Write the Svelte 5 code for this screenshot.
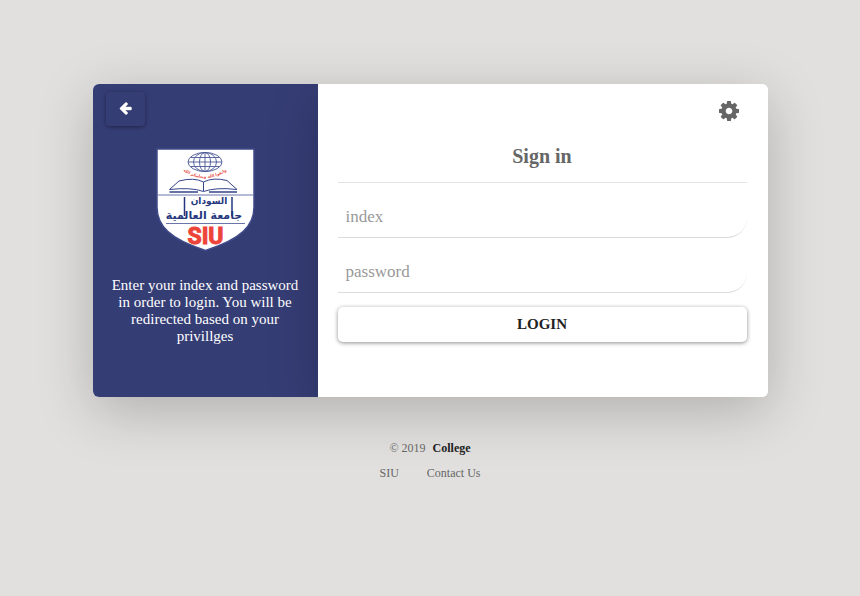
<script>
  let index = $state('');
  let password = $state('');
</script>

<div class="page">
  <main class="card">
    <section class="intro">
      <button class="back" type="button" aria-label="Back">
        <svg width="13" height="13" viewBox="64 128 1664 1664" aria-hidden="true">
          <path fill="currentColor" stroke="currentColor" stroke-width="60" d="M1664 896v128q0 53-32.500 90.500t-84.500 37.500h-704l293 294q38 36 38 90t-38 90l-75 76q-37 37-90 37-52 0-91-37l-651-652q-37-37-37-90 0-52 37-91l651-650q38-38 91-38 52 0 90 38l75 74q38 38 38 91t-38 91l-293 293h704q52 0 84.500 37.500t32.500 90.500z" />
        </svg>
      </button>

      <svg class="logo" width="104" height="108" viewBox="153 145 104 108" role="img" aria-label="SIU">
        <path d="M157 149H254V207C254 226 241 239 205.500 250.500C170 239 157 226 157 207Z" fill="#fff" stroke="#404b8a" stroke-width="1.500" />
        <g fill="none" stroke="#4a5896" stroke-width="0.900">
          <ellipse cx="205" cy="162" rx="17" ry="9.500" />
          <ellipse cx="205" cy="162" rx="11.500" ry="9.500" />
          <ellipse cx="205" cy="162" rx="5.500" ry="9.500" />
          <path d="M205 152.500v19M188 162h34M190.500 157.500h29M190.500 166.500h29" />
        </g>
        <path id="motto" d="M178 167Q205 189 232 167" fill="none" />
        <text class="motto" text-anchor="middle"><textPath href="#motto" startOffset="50%">واتقوا الله ويعلمكم الله</textPath></text>
        <g fill="none" stroke="#36458a" stroke-linejoin="round">
          <path d="M169.500 189.500L179 181Q194 177 203.500 182Q213 177 227 180.500L237 189.500Q216 187 203.500 191.500Q191 187 169.500 189.500ZM203.500 182V191" fill="#fff" stroke-width="1" />
          <path d="M169.500 192H198M209 192H237" stroke-width="1.500" />
        </g>
        <path d="M158 195H253M166 223.500H245" stroke="#6a76a8" stroke-width="1" />
        <g class="arabic" text-anchor="middle">
          <text x="209" y="204" font-size="9">السودان</text>
          <text x="204" y="219" font-size="11">جامعة العالمية</text>
        </g>
        <path d="M184.500 197v19M232 197v19" stroke="#26377e" stroke-width="1.500" />
        <text class="siu" x="205.500" y="244" text-anchor="middle">SIU</text>
      </svg>

      <p>Enter your index and password in order to login. You will be redirected based on your privillges</p>
    </section>

    <section class="signin">
      <button class="settings" type="button" aria-label="Settings">
        <svg width="20" height="20" viewBox="0 -128 1536 1536" aria-hidden="true">
          <path fill="currentColor" fill-rule="evenodd" d="M1024 640q0-106-75-181t-181-75-181 75-75 181 75 181 181 75 181-75 75-181zm512-109v222q0 12-8 23t-20 13l-185 28q-19 54-39 91 35 50 107 138 10 12 10 25t-9 23q-27 37-99 108t-94 71q-12 0-26-9l-138-108q-44 23-91 38-16 136-29 186-7 28-36 28h-222q-14 0-24.500-8.500t-11.500-21.500l-28-184q-49-16-90-37l-141 107q-10 9-25 9-14 0-25-11-126-114-165-168-7-10-7-23 0-12 8-23 15-21 51-66.500t54-70.500q-27-50-41-99l-183-27q-13-2-21-12.500t-8-23.500v-222q0-12 8-23t19-13l186-28q14-46 39-92-40-57-107-138-10-12-10-24 0-10 9-23 26-36 98.500-107.500t94.500-71.500q13 0 26 10l138 107q44-23 91-38 16-136 29-186 7-28 36-28h222q14 0 24.500 8.500t11.500 21.500l28 184q49 16 90 37l142-107q9-9 24-9 13 0 25 10 129 119 165 170 7 8 7 22 0 12-8 23-15 21-51 66.500t-54 70.500q26 50 41 98l183 28q13 2 21 12.500t8 23.500z" />
        </svg>
      </button>

      <h1>Sign in</h1>
      <form onsubmit={(e) => e.preventDefault()}>
        <input type="text" placeholder="index" aria-label="index" bind:value={index} />
        <input type="password" placeholder="password" aria-label="password" bind:value={password} />
        <button class="login" type="submit">LOGIN</button>
      </form>
    </section>
  </main>

  <footer>
    <div>© 2019 <a class="brand" href="#college">College</a></div>
    <nav>
      <a href="#siu">SIU</a>
      <a href="#contact">Contact Us</a>
    </nav>
  </footer>
</div>

<style>
  :global(body) {
    margin: 0;
    background: #e1e0de;
  }
  .page {
    box-sizing: border-box;
    min-height: 100vh;
    padding: 84px 20px 20px;
    font-family: "Liberation Serif", "Times New Roman", serif;
    color: #666;
  }
  .card {
    display: grid;
    grid-template-columns: 1fr 2fr;
    max-width: 675px;
    margin: 0 auto;
    border-radius: 6px;
    overflow: hidden;
    background: #fff;
    box-shadow: 0 14px 56px rgba(0, 0, 0, 0.22);
  }
  .intro {
    display: flex;
    flex-direction: column;
    align-items: center;
    padding: 8px 13px 52px;
    color: #fff;
    background: #353d75;
  }
  button {
    padding: 0;
    border: 0;
    background: none;
    font-family: inherit;
    cursor: pointer;
  }
  .back {
    box-sizing: border-box;
    display: grid;
    place-items: center;
    align-self: flex-start;
    width: 39px;
    height: 34px;
    padding-bottom: 2px;
    border-radius: 4px;
    color: #fff;
    box-shadow: 0 1px 4px rgba(0, 0, 0, 0.4);
  }
  .logo {
    margin-top: 19px;
  }
  .motto {
    font: bold 4px "DejaVu Sans", sans-serif;
    fill: #e64b43;
  }
  .arabic {
    font-family: "DejaVu Sans", sans-serif;
    font-weight: bold;
    fill: #26377e;
  }
  .siu {
    font: bold 23px Roboto, "Liberation Sans", sans-serif;
    fill: #ed4339;
    stroke: #ed4339;
    stroke-width: 1px;
  }
  p {
    margin: 24px 0 0;
    font-size: 15px;
    line-height: 17px;
    text-align: center;
  }
  .signin {
    position: relative;
    display: flex;
    flex-direction: column;
    padding: 17px 21px 54px 20px;
    background: #fff;
    box-shadow: 0 14px 48px rgba(0, 0, 0, 0.2);
  }
  .settings {
    align-self: flex-end;
    display: flex;
    margin-right: 8px;
    color: #666;
  }
  h1 {
    margin: 23px 0 14px;
    padding-bottom: 13px;
    border-bottom: 1px solid #e3e3e3;
    font-size: 20px;
    line-height: 25px;
    text-align: center;
  }
  form {
    display: flex;
    flex-direction: column;
    gap: 14px;
  }
  input {
    box-sizing: border-box;
    width: 100%;
    height: 41px;
    padding: 0 8px;
    border: 0 solid transparent;
    border-bottom: 1px solid #dcdcdc;
    border-radius: 0 20px 20px 0;
    outline: 0;
    background: none;
    font-family: inherit;
    font-size: 17px;
    color: #333;
  }
  input::placeholder {
    color: #999;
    opacity: 1;
  }
  .login {
    height: 35px;
    border-radius: 5px;
    background: #fff;
    box-shadow: 0 1px 4px rgba(0, 0, 0, 0.45);
    color: #222;
    font-size: 15px;
    font-weight: bold;
  }
  footer {
    margin-top: 39px;
    font-size: 12px;
    line-height: 25px;
    text-align: center;
  }
  footer a {
    color: inherit;
    text-decoration: none;
  }
  footer .brand {
    margin-left: 4px;
    color: #222;
    font-weight: bold;
  }
  nav {
    display: flex;
    justify-content: center;
    gap: 28px;
  }
</style>
